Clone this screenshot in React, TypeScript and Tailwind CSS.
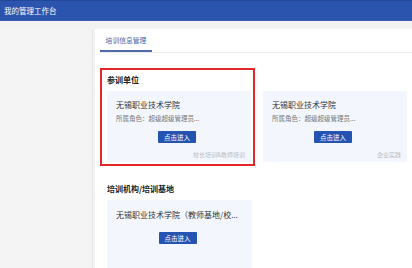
import React from "react";

const font = { fontFamily: '"Noto Sans CJK SC", "Noto Sans", sans-serif' };

function Card({
  title,
  role,
  tag,
  width = "w-[144px]",
}: {
  title: string;
  role?: string;
  tag?: string;
  width?: string;
}) {
  return (
    <div className={`${width} ${role ? "h-[71px]" : "h-[80px]"} bg-[#f3f7fd] flex flex-col shrink-0`}>
      <div className={`pl-[9px] ${role ? "mt-[8px]" : "mt-[9px]"} h-[12px] leading-[12px] text-[8px] text-[#333] whitespace-nowrap`}>
        {title}
      </div>
      {role && (
        <div className="pl-[9px] mt-[2px] h-[10px] leading-[10px] text-[6.5px] text-[#777] whitespace-nowrap">
          {role}
        </div>
      )}
      <div className={`flex justify-center pr-[4px] ${role ? "mt-[8px]" : "mt-[11px]"}`}>
        <div className="w-[38px] h-[12px] bg-[#2553b2] rounded-[1px] text-white text-[6.5px] leading-[12px] text-center">
          点击进入
        </div>
      </div>
      {tag && (
        <div className="mt-[8px] pr-[6px] h-[8px] leading-[8px] text-right text-[6px] text-[#bbbbbb] whitespace-nowrap">
          {tag}
        </div>
      )}
    </div>
  );
}

export default function App() {
  return (
    <div className="w-[412px] h-[268px] overflow-hidden bg-[#f2f2f2] flex flex-col" style={font}>
      <div className="h-[21px] shrink-0 bg-[#2b54ae] border-t border-[#24479a] border-b border-b-[#3a5fb0] flex items-center pl-[4px] text-white text-[7.5px]">
        我的管理工作台
      </div>
      <div className="flex flex-1 pt-[8px]">
        <div className="w-[93px] shrink-0 bg-[#f4f4f4] border-r border-[#e6e6e6]" />
        <div className="ml-[2px] flex-1 bg-white pl-[5px] flex flex-col">
          <div className="h-[24px] border-b border-[#eeeeee] flex items-end">
            <div className="w-[52px] h-[24px] border-b-2 border-[#4e6aa8] flex items-center justify-center text-[6.8px] text-[#4a66a8] pt-[2px]">
              培训信息管理
            </div>
          </div>
          <div className="flex mt-[15px]">
            <div className="w-[155px] border-2 border-[#e2262c] pl-[5px] pr-[2px] pt-[4px] pb-[2px] flex flex-col">
              <div className="h-[12px] leading-[12px] text-[8px] font-bold text-[#222] mb-[5px]">参训单位</div>
              <Card title="无锡职业技术学院" role="所属角色：超级超级管理员..." tag="校长培训&教师培训" />
            </div>
            <div className="ml-[8px] mt-[23px]">
              <Card title="无锡职业技术学院" role="所属角色：超级超级管理员..." tag="企业实践" />
            </div>
          </div>
          <div className="mt-[17px] pl-[7px] flex flex-col">
            <div className="h-[12px] leading-[12px] text-[8px] font-bold text-[#222] mb-[5px]">培训机构/培训基地</div>
            <Card title="无锡职业技术学院（教师基地/校..." width="w-[145px]" />
          </div>
        </div>
      </div>
    </div>
  );
}
